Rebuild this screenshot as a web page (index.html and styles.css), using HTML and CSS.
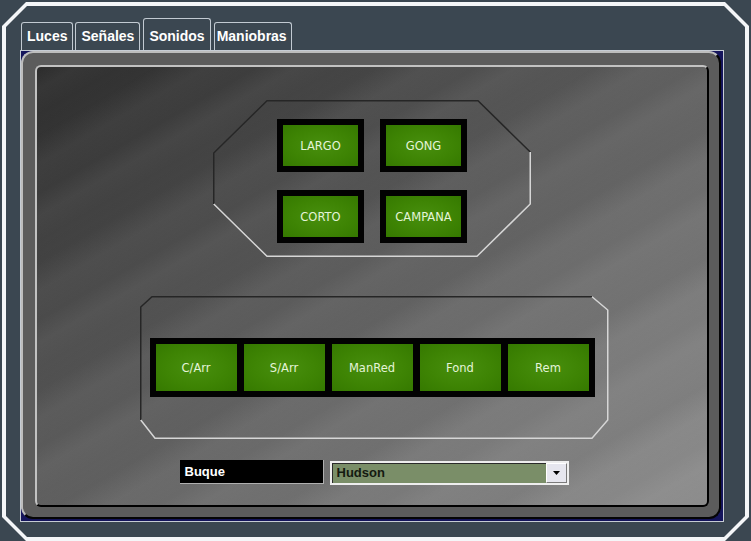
FILE: index.html
```
<!DOCTYPE html>
<html lang="es">
<head>
<meta charset="utf-8">
<title>Sonidos</title>
<link rel="stylesheet" href="styles.css">
</head>
<body>
<div class="frame">
  <div class="win">
    <div class="tabs">
      <div class="tab">Luces</div>
      <div class="tab">Señales</div>
      <div class="tab sel">Sonidos</div>
      <div class="tab last">Maniobras</div>
    </div>
    <div class="pane">
      <div class="outer">
        <div class="inner">
          <div class="grp grp1">
            <svg class="outline" width="318" height="157" viewBox="0 0 318 157">
              <polyline class="dk" points="0.75,104 0.75,53 54,0.75 265,0.75 317.25,52"/>
              <polyline class="lt" points="317.25,52 317.25,104 264,156.25 54,156.25 0.75,104"/>
            </svg>
            <div class="sounds">
              <div class="btn">LARGO</div>
              <div class="btn">GONG</div>
              <div class="btn">CORTO</div>
              <div class="btn">CAMPANA</div>
            </div>
          </div>
          <div class="grp grp2">
            <svg class="outline" width="469" height="143" viewBox="0 0 469 143">
              <polyline class="dk" points="0.75,124 0.75,11 12,0.75 452,0.75"/>
              <polyline class="lt" points="452,0.75 467.75,14 467.75,124 452,142.25 15,142.25 0.75,124"/>
            </svg>
            <div class="strip">
              <div class="cell">C/Arr</div>
              <div class="cell">S/Arr</div>
              <div class="cell">ManRed</div>
              <div class="cell">Fond</div>
              <div class="cell">Rem</div>
            </div>
          </div>
          <div class="ship">
            <div class="label">Buque</div>
            <div class="combo">
              <span class="value">Hudson</span>
              <span class="arrow"><svg width="7" height="4" viewBox="0 0 7 4"><polygon points="0,0 7,0 3.5,4" fill="#000"/></svg></span>
            </div>
          </div>
        </div>
      </div>
    </div>
  </div>
</div>
</body>
</html>
```
FILE: styles.css
```
html, body {
  margin: 0;
  padding: 0;
  width: 751px;
  height: 541px;
  overflow: hidden;
  background: #3b4751;
}

body {
  padding-top: 2px;
  box-sizing: border-box;
}

.frame {
  box-sizing: border-box;
  margin: 0 2px;
  height: 539px;
  padding: 4px;
  background: #f4f6f8;
  clip-path: polygon(24px 0, calc(100% - 24px) 0, 100% 24px, 100% calc(100% - 24px), calc(100% - 24px) 100%, 24px 100%, 0 calc(100% - 24px), 0 24px);
}

.win {
  box-sizing: border-box;
  height: 100%;
  background: #3b4751;
  clip-path: polygon(21px 0, calc(100% - 21px) 0, 100% 21px, 100% calc(100% - 21px), calc(100% - 21px) 100%, 21px 100%, 0 calc(100% - 21px), 0 21px);
  padding: 12px 21px 15px 14px;
  display: flex;
  flex-direction: column;
}

.tabs {
  display: flex;
  align-items: flex-end;
  gap: 2px;
  height: 32px;
  padding-left: 1px;
}

.tab {
  box-sizing: border-box;
  height: 28px;
  padding: 5px 5px 0 5px;
  border: 1px solid #c2cad2;
  border-bottom: 0;
  border-radius: 3px 3px 0 0;
  font: bold 14px/16px "Liberation Sans", Arial, sans-serif;
  color: #ffffff;
  background: #3b4751;
}

.tab.sel {
  height: 32px;
  padding-top: 9px;
  margin: 0 1px;
}

.tab.last {
  padding-left: 2px;
  padding-right: 4px;
}

.pane {
  flex: 1;
  display: flex;
  border: 1px solid #c6ccd4;
  background: #15155c;
  padding: 0 2px 2px 0;
}

.outer {
  flex: 1;
  display: flex;
  box-sizing: border-box;
  border: 2px solid;
  border-color: #bdbdbd #050505 #050505 #bdbdbd;
  border-radius: 12px;
  background: #5c5c5c;
  padding: 12px 10px 10px 12px;
}

.inner {
  flex: 1;
  display: flex;
  flex-direction: column;
  align-items: center;
  border: 2px solid;
  border-color: #c2c2c2 #000 #000 #c2c2c2;
  border-radius: 6px;
  background:
    repeating-linear-gradient(150deg,
      rgba(255,255,255,0) 0px,
      rgba(255,255,255,0.035) 20px,
      rgba(255,255,255,0) 42px,
      rgba(0,0,0,0.03) 60px,
      rgba(255,255,255,0.03) 85px,
      rgba(255,255,255,0) 110px),
    linear-gradient(to bottom right, #2c2c2c 0%, #4a4a4a 28%, #626262 52%, #7a7a7a 76%, #8e8e8e 100%);
}

.grp {
  display: grid;
}

.grp > * {
  grid-area: 1 / 1;
}

.outline .dk,
.outline .lt {
  fill: none;
  stroke-width: 1.5;
}

.outline .dk {
  stroke: #262626;
}

.outline .lt {
  stroke: #d6d6d6;
}

.grp1 {
  width: 318px;
  height: 157px;
  margin-top: 33px;
}

.sounds {
  justify-self: center;
  align-self: start;
  margin-top: 19px;
  display: grid;
  grid-template-columns: 87px 87px;
  grid-auto-rows: 53px;
  gap: 18px 16px;
}

.btn,
.cell {
  display: flex;
  align-items: center;
  justify-content: center;
  font: 11.5px/14px "DejaVu Sans", Verdana, sans-serif;
  color: #e4f4d8;
  background: radial-gradient(ellipse at center, #488f0e 0%, #3e8404 55%, #357900 100%);
}

.btn {
  box-sizing: border-box;
  border: 6px solid #020202;
}

.grp2 {
  width: 469px;
  height: 143px;
  margin-top: 39px;
  margin-left: 4px;
}

.strip {
  justify-self: start;
  align-self: center;
  margin-left: 10px;
  display: flex;
  gap: 7px;
  padding: 6px;
  background: #020202;
}

.cell {
  width: 81px;
  height: 47px;
}

.ship {
  margin-top: 21px;
  margin-left: 4px;
  display: flex;
  align-items: flex-start;
  gap: 6px;
}

.label {
  box-sizing: border-box;
  width: 144px;
  height: 24px;
  padding-left: 5px;
  background: #000;
  border-right: 1px solid #b0b0b0;
  border-bottom: 1px solid #b0b0b0;
  font: bold 13px/23px "Liberation Sans", Arial, sans-serif;
  color: #ffffff;
}

.combo {
  box-sizing: border-box;
  width: 239px;
  height: 24px;
  margin-top: 1px;
  display: flex;
  align-items: stretch;
  border: 2px solid #eeeeee;
  background: #7a8e68;
  box-shadow: inset 1px 1px 0 #2a2a2a;
}

.value {
  flex: 1;
  padding-left: 5px;
  font: bold 13px/20px "Liberation Sans", Arial, sans-serif;
  color: #141a10;
}

.arrow {
  box-sizing: border-box;
  width: 21px;
  display: flex;
  align-items: center;
  justify-content: center;
  background: #e6e6ee;
  border-top: 1px solid #ffffff;
  border-left: 1px solid #ffffff;
  border-right: 1px solid #7a7a7a;
  border-bottom: 1px solid #7a7a7a;
}
```
